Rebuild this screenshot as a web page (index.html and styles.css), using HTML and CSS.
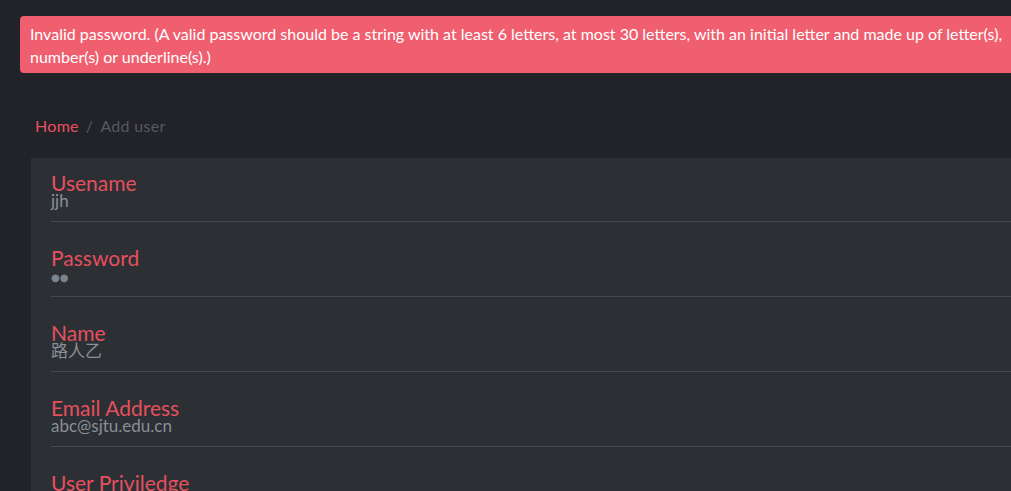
FILE: index.html
```html
<!DOCTYPE html>
<html lang="en">
<head>
<meta charset="utf-8">
<title>Add user</title>
<link rel="stylesheet" href="styles.css">
</head>
<body>
<div class="page">
  <div class="alert">Invalid password. (A valid password should be a string with at least 6 letters, at most 30 letters, with an initial letter and made up of letter(s),<br>number(s) or underline(s).)</div>
  <nav class="crumbs">
    <a class="crumb-home" href="#">Home</a>
    <span class="crumb-sep">/</span>
    <span class="crumb-current">Add user</span>
  </nav>
  <div class="panel">
    <div class="field">
      <div class="label">Usename</div>
      <div class="value">jjh</div>
    </div>
    <div class="field">
      <div class="label">Password</div>
      <div class="value dots">●●</div>
    </div>
    <div class="field">
      <div class="label">Name</div>
      <div class="value">路人乙</div>
    </div>
    <div class="field">
      <div class="label">Email Address</div>
      <div class="value">abc@sjtu.edu.cn</div>
    </div>
    <div class="field">
      <div class="label">User Priviledge</div>
      <div class="value">Administrator</div>
    </div>
  </div>
</div>
</body>
</html>
```
FILE: styles.css
```css
html, body {
  margin: 0;
  padding: 0;
  background: #212328;
  overflow: hidden;
  height: 100%;
}
body {
  font-family: Lato, "Noto Sans CJK SC", sans-serif;
}
.page {
  width: 1100px;
  padding-top: 16px;
}
.alert {
  margin-left: 20px;
  width: 1040px;
  box-sizing: border-box;
  background: #f05f6f;
  color: #ffffff;
  border-radius: 4px;
  padding: 6px 10px 5px;
  font-size: 16px;
  line-height: 23px;
}
.crumbs {
  margin: 41px 0 0 35px;
  font-size: 16px;
  line-height: 24px;
  letter-spacing: 0.3px;
  display: flex;
  gap: 7px;
}
.crumb-home {
  color: #e8505f;
  text-decoration: none;
}
.crumb-sep, .crumb-current {
  color: #555961;
}
.panel {
  margin: 20px 0 0 31px;
  background: #2c2f34;
  padding: 0 0 0 20px;
}
.field {
  padding: 25px 0 12px;
  border-bottom: 1px solid #45484e;
}
.field:first-child {
  padding-top: 14px;
}
.label {
  color: #e5505f;
  font-size: 21px;
  line-height: 21px;
}
.value {
  color: #8a9098;
  font-size: 17px;
  line-height: 16px;
  height: 16px;
}
.dots {
  font-family: "DejaVu Sans", sans-serif;
  font-size: 10px;
  line-height: 20px;
  letter-spacing: 0;
  color: #7d838c;
}
```
